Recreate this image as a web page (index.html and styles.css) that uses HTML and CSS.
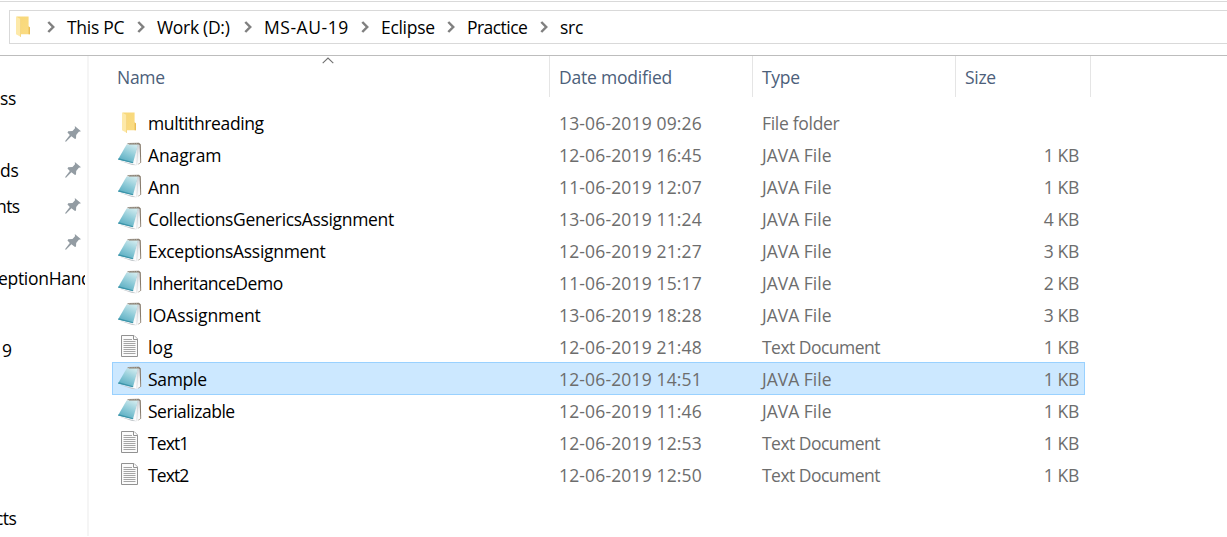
FILE: index.html
```
<!DOCTYPE html>
<html lang="en">
<head>
<meta charset="utf-8">
<title>src</title>
<link rel="stylesheet" href="styles.css">
</head>
<body>
<svg class="defs" width="0" height="0" aria-hidden="true">
  <defs>
    <linearGradient id="gf" x1="0" x2="1" y1="0" y2="1"><stop offset="0" stop-color="#f7d779"/><stop offset="1" stop-color="#fbdc83"/></linearGradient>
    <linearGradient id="gn" x1="0.8" x2="0.3" y1="0" y2="1"><stop offset="0" stop-color="#d0eaee"/><stop offset="0.5" stop-color="#8fcbd8"/><stop offset="1" stop-color="#56abc0"/></linearGradient>
    <linearGradient id="gp" x1="0" x2="0" y1="0" y2="1"><stop offset="0" stop-color="#cfd3d8"/><stop offset="0.5" stop-color="#f0f1f3"/><stop offset="1" stop-color="#ffffff"/></linearGradient>
    <symbol id="folder" viewBox="0 0 14 21"><path d="M0.5 0.5H12.6V10.5L14 11.5V18.2H4Z" fill="url(#gf)"/><path d="M12.6 10.2L14 11.5V18.2H12.6Z" fill="#e9bd58"/><path d="M0 0.5L5 3.2V21L0 18.2Z" fill="#fde9a9"/><path d="M4.5 3V20.8" stroke="#f4d37c" stroke-width=".8"/></symbol>
    <symbol id="note" viewBox="0 0 24 24"><path d="M10 1L21 .8L22.8 2.4L23.2 20.5L20 22.4Z" fill="#877b6c"/><path d="M20 2.2L21.6 3L22.3 20.6L18.8 23L13.5 21.5Z" fill="url(#gp)"/><path d="M20.1 3L18.8 22.8" stroke="#c9cdd2" stroke-width=".6"/><path d="M8.6 2.4L20 2.6L15 21L0 17.6Z" fill="url(#gn)"/><path d="M0 17.6L15 21.3L15.3 20.3L.8 16.3Z" fill="#3b93a8"/><path d="M1 18.4L15 22L18.8 23.3L14 23Z" fill="#c4c9cd"/><path d="M9 1.8L20.3 1.9" stroke="#b9b9b4" stroke-width="1" stroke-dasharray="1 .8"/></symbol>
    <symbol id="doc" viewBox="0 0 17 22"><path d="M.5 .5H13L16.5 4V21.5H.5Z" fill="#fbfbfb" stroke="#929292"/><path d="M12.5 .5V4.5H16.5" fill="#fff" stroke="#929292"/><path d="M2.5 4.5H11M2.5 6.5H14.5M2.5 8.5H14.5M2.5 10.5H14.5M2.5 12.5H14.5M2.5 14.5H14.5M2.5 16.5H14.5M2.5 18.5H14.5" stroke="#a5a5a5" stroke-width="1"/></symbol>
    <symbol id="pin" viewBox="0 0 16 16"><path d="M9.8 0L16 5.2L13.8 5.8L11.2 9L11 12.6L10 13L6.4 10.2L1 15.8L0 15.2L4.8 9L2.5 6.4L3.2 5.2L7.5 5L10 2.2Z" fill="#939ca3"/></symbol>
    <symbol id="chev" viewBox="0 0 8 12"><path d="M1.3 1L6.2 6L1.3 11" fill="none" stroke="#808080" stroke-width="2.5"/></symbol>
  </defs>
</svg>
<div class="window">
  <header class="toolbar">
    <nav class="address">
      <svg class="folder"><use href="#folder"/></svg>
      <svg class="chev"><use href="#chev"/></svg><span class="c-pc">This PC</span>
      <svg class="chev"><use href="#chev"/></svg><span class="c-work">Work (D:)</span>
      <svg class="chev"><use href="#chev"/></svg><span class="c-ms">MS-AU-19</span>
      <svg class="chev"><use href="#chev"/></svg><span class="c-ecl">Eclipse</span>
      <svg class="chev"><use href="#chev"/></svg><span class="c-prac">Practice</span>
      <svg class="chev"><use href="#chev"/></svg><span class="c-src">src</span>
    </nav>
  </header>
  <div class="body">
    <aside class="side">
      <div class="item"><span>ss</span></div>
      <div class="item"><svg class="pin"><use href="#pin"/></svg></div>
      <div class="item"><span>ds</span><svg class="pin"><use href="#pin"/></svg></div>
      <div class="item"><span class="cut">nts</span><svg class="pin"><use href="#pin"/></svg></div>
      <div class="item"><svg class="pin"><use href="#pin"/></svg></div>
      <div class="item"><span class="cut-e">eptionHandling</span></div>
      <div class="item"></div>
      <div class="item"><span class="nine">9</span></div>
      <div class="item last"><span class="cut-c">cts</span></div>
    </aside>
    <main class="list">
      <div class="head">
        <div class="h-name"><span>Name</span><svg class="sort" viewBox="0 0 12 7"><path d="M.7 6.2L6 1L11.3 6.2" fill="none" stroke="#707070" stroke-width="1.1"/></svg></div>
        <div class="h-date"><span>Date modified</span></div><div class="h-type"><span>Type</span></div><div class="h-size"><span>Size</span></div>
      </div>
      <div class="rows">
        <div class="row"><svg class="folder"><use href="#folder"/></svg><span class="name tight">multithreading</span><span class="date">13-06-2019 09:26</span><span class="type">File folder</span><span class="size"></span></div>
        <div class="row"><svg class="note"><use href="#note"/></svg><span class="name loose">Anagram</span><span class="date">12-06-2019 16:45</span><span class="type java">JAVA File</span><span class="size">1 KB</span></div>
        <div class="row"><svg class="note"><use href="#note"/></svg><span class="name">Ann</span><span class="date">11-06-2019 12:07</span><span class="type java">JAVA File</span><span class="size">1 KB</span></div>
        <div class="row"><svg class="note"><use href="#note"/></svg><span class="name long">CollectionsGenericsAssignment</span><span class="date">13-06-2019 11:24</span><span class="type java">JAVA File</span><span class="size">4 KB</span></div>
        <div class="row"><svg class="note"><use href="#note"/></svg><span class="name">ExceptionsAssignment</span><span class="date">12-06-2019 21:27</span><span class="type java">JAVA File</span><span class="size">3 KB</span></div>
        <div class="row"><svg class="note"><use href="#note"/></svg><span class="name tighter">InheritanceDemo</span><span class="date">11-06-2019 15:17</span><span class="type java">JAVA File</span><span class="size">2 KB</span></div>
        <div class="row"><svg class="note"><use href="#note"/></svg><span class="name loose">IOAssignment</span><span class="date">13-06-2019 18:28</span><span class="type java">JAVA File</span><span class="size">3 KB</span></div>
        <div class="row"><svg class="doc"><use href="#doc"/></svg><span class="name looser">log</span><span class="date">12-06-2019 21:48</span><span class="type text">Text Document</span><span class="size">1 KB</span></div>
        <div class="row selected"><svg class="note"><use href="#note"/></svg><span class="name">Sample</span><span class="date">12-06-2019 14:51</span><span class="type java">JAVA File</span><span class="size">1 KB</span></div>
        <div class="row"><svg class="note"><use href="#note"/></svg><span class="name tighter">Serializable</span><span class="date">12-06-2019 11:46</span><span class="type java">JAVA File</span><span class="size">1 KB</span></div>
        <div class="row"><svg class="doc"><use href="#doc"/></svg><span class="name tightest">Text1</span><span class="date">12-06-2019 12:53</span><span class="type text">Text Document</span><span class="size">1 KB</span></div>
        <div class="row"><svg class="doc"><use href="#doc"/></svg><span class="name tightest">Text2</span><span class="date">12-06-2019 12:50</span><span class="type text">Text Document</span><span class="size">1 KB</span></div>
      </div>
    </main>
  </div>
</div>
</body>
</html>
```
FILE: styles.css
```
* { box-sizing: border-box; }
body { margin: 0; background: #fff; color: #000; font: 17.5px/24px "Open Sans", "Noto Sans", sans-serif; letter-spacing: -0.3px; overflow: hidden; }
.defs { display: block; height: 0; }
svg { flex: none; display: block; }
span { white-space: nowrap; }
.window { height: 537px; display: flex; flex-direction: column; padding-top: 1px; }
.toolbar { height: 55px; flex: none; border-top: 1px solid #d9d9d9; border-bottom: 1px solid #bdbdbd; padding: 8px 0 0 9px; }
.address { height: 34px; border: 1px solid #d9d9d9; border-right: 0; display: flex; align-items: center; padding-left: 6px; }
.folder { width: 14px; height: 21px; }
.address .folder { margin: -2px 17px 0 0; }
.chev { width: 8px; height: 12px; margin-right: 12px; }
.c-pc { width: 70px; }
.c-work { width: 87px; }
.c-ms { width: 97px; letter-spacing: 0.55px; }
.c-ecl { width: 66px; }
.c-prac { width: 73px; letter-spacing: -0.55px; }
.body { flex: 1; display: flex; min-height: 0; }
.side { width: 89px; border-right: 2px solid #f5f5f5; padding: 24px 2px 0 0; margin-bottom: 1px; flex: none; overflow: hidden; }
.item { height: 36px; display: flex; align-items: center; overflow: hidden; width: 85px; }
.pin { width: 16px; height: 16px; margin: 0 4px 0 auto; }
.cut { margin-left: -4px; letter-spacing: -0.6px; }
.cut-e { margin-left: -2px; }
.cut-c { margin-left: -5px; letter-spacing: -0.6px; }
.nine { margin-left: 2px; }
.item.last { margin-top: 132px; }
.list { flex: 1; padding-left: 23px; }
.head { display: flex; height: 41px; color: #4c607a; }
.head > div { border-right: 1px solid #e5e5e5; padding-top: 9px; position: relative; }
.h-name { width: 438px; padding-left: 5px; }
.h-date { width: 203px; padding-left: 9px; letter-spacing: -0.2px; }
.h-type { width: 203px; padding-left: 9px; }
.h-size { width: 135px; padding-left: 9px; }
.sort { position: absolute; left: 210px; top: 1px; width: 12px; height: 7px; }
.rows { padding-top: 9px; }
.row { width: 973px; height: 33px; margin-bottom: -1px; border: 1px solid transparent; display: flex; align-items: center; padding-left: 5px; color: #6d6d6d; }
.row.selected { background: #cce8ff; border-color: #99d1ff; }
.note { width: 24px; height: 24px; margin: -1px 6px 0 0; }
.row .folder { margin: -1px 12px 0 4px; }
.doc { width: 17px; height: 22px; margin: -1px 10px 0 3px; }
.name { width: 411px; color: #000; }
.long { letter-spacing: -0.34px; }
.tight { letter-spacing: -0.38px; }
.tighter { letter-spacing: -0.48px; }
.tightest { letter-spacing: -0.9px; }
.loose { letter-spacing: -0.1px; }
.looser { letter-spacing: 0.2px; }
.date { width: 203px; letter-spacing: 0.15px; }
.type { width: 203px; }
.java { letter-spacing: 0; }
.text { letter-spacing: -0.53px; }
.size { width: 114px; text-align: right; }
```
